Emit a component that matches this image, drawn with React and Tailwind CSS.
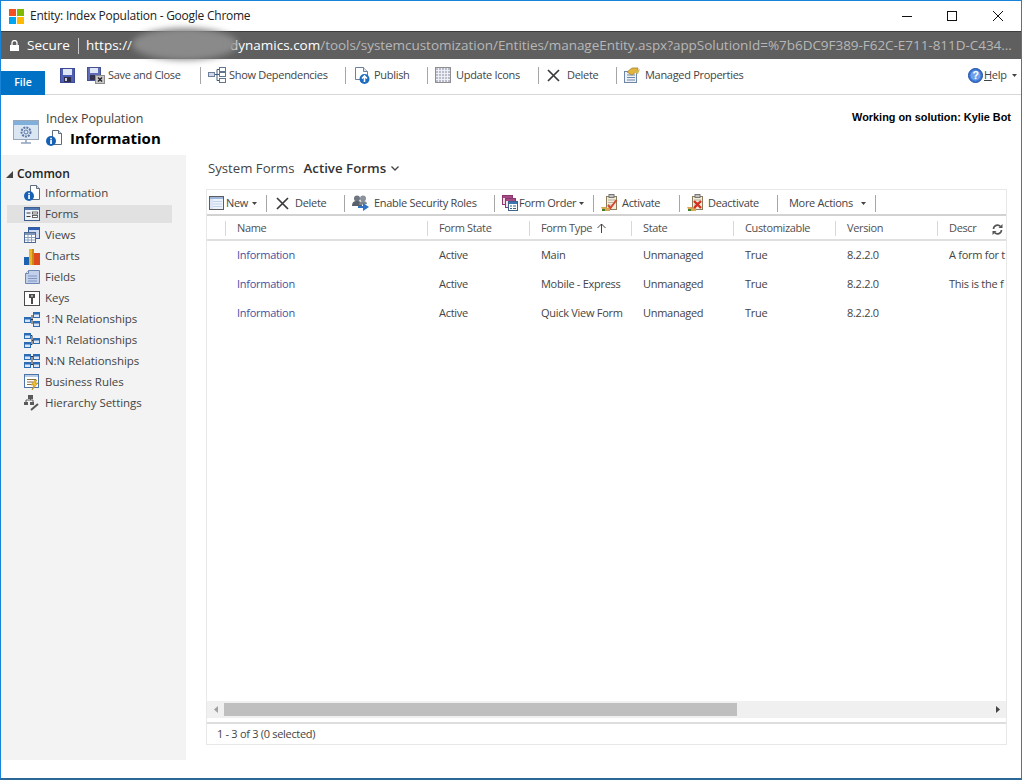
import React from "react";

const F = "font-['Open_Sans',sans-serif]";

const Svg = ({ w = 16, h = 16, className = "", children }) => (
  <svg width={w} height={h} viewBox={`0 0 ${w} ${h}`} className={"shrink-0 " + className}>{children}</svg>
);

const Floppy = () => (
  <Svg w={15} h={15}>
    <rect x="0.5" y="0.5" width="14" height="14" fill="#4f5fb5" stroke="#3c4a96" />
    <rect x="3" y="1" width="9" height="6" fill="#dfe6f5" />
    <rect x="4" y="9" width="7" height="5" fill="#2d2d4a" />
    <rect x="5" y="10" width="2" height="3" fill="#c9cfe0" />
  </Svg>
);
const FloppyClose = () => (
  <Svg w={18} h={17}>
    <rect x="0.5" y="0.5" width="13" height="13" fill="#5f6db8" stroke="#46528f" />
    <rect x="3" y="1" width="8" height="5" fill="#dfe6f5" />
    <rect x="3" y="8" width="7" height="5" fill="#34344f" />
    <rect x="8.5" y="8.5" width="9" height="8" fill="#c8c8c8" stroke="#8c8c8c" />
    <path d="M11 10.5l4 4M15 10.5l-4 4" stroke="#222" strokeWidth="1.4" />
  </Svg>
);
const Deps = () => (
  <Svg w={18} h={16}>
    <rect x="0.5" y="5.5" width="6" height="4" fill="#cfd8e8" stroke="#6d7f99" />
    <rect x="11.5" y="0.5" width="6" height="4" fill="#fff" stroke="#5f7590" />
    <rect x="11.5" y="5.5" width="6" height="4" fill="#fff" stroke="#5f7590" />
    <rect x="11.5" y="11.5" width="6" height="4" fill="#fff" stroke="#5f7590" />
    <path d="M7 7.5h4M9 2.5v11M9 2.5h2M9 13.5h2" stroke="#3f5a7a" fill="none" />
  </Svg>
);
const Publish = () => (
  <Svg w={16} h={17}>
    <path d="M1.5.5h8l4 4v8h-12z" fill="#fff" stroke="#6f7f95" />
    <path d="M9.5.5v4h4" fill="#dfe7f2" stroke="#6f7f95" />
    <circle cx="10.5" cy="12" r="5" fill="#1c6cc0" />
    <path d="M10.5 15v-5M8 11.5l2.5-2.5 2.5 2.5" stroke="#fff" strokeWidth="1.6" fill="none" />
  </Svg>
);
const GridIcon = () => (
  <Svg w={16} h={16}>
    <rect x="0.5" y="0.5" width="15" height="15" fill="#b9bccb" stroke="#8f8f8f" />
    <path d="M3.5 1v14M6.5 1v14M9.5 1v14M12.5 1v14M1 3.5h14M1 6.5h14M1 9.5h14M1 12.5h14" stroke="#eef0f6" />
  </Svg>
);
const XIcon = ({ s = 13 }) => (
  <Svg w={s} h={s}>
    <path d={`M1 1L${s - 1} ${s - 1}M${s - 1} 1L1 ${s - 1}`} stroke="#3a3a3a" strokeWidth="1.7" />
  </Svg>
);
const Managed = () => (
  <Svg w={17} h={16}>
    <rect x="0.5" y="4.5" width="12" height="11" fill="#eef2f8" stroke="#6e86a5" />
    <path d="M3 8h8M3 10.5h8M3 13h8" stroke="#6e86a5" />
    <path d="M3 5l5-4h6l-1 3-5 4z" fill="#e3b53d" stroke="#9a7a22" strokeWidth="0.7" />
    <path d="M9 5l7-3-2 5z" fill="#d4b655" />
  </Svg>
);
const HelpI = () => (
  <Svg w={15} h={15}>
    <circle cx="7.5" cy="7.5" r="7" fill="#3d78d6" stroke="#1f4fa3" />
    <circle cx="7.5" cy="7.5" r="5" fill="#6fa1e8" />
    <text x="7.5" y="11.2" textAnchor="middle" fontSize="10.5" fontWeight="700" fill="#fff" fontFamily="Liberation Sans">?</text>
  </Svg>
);
const Info = () => (
  <Svg w={16} h={16}>
    <path d="M6.5.5h6l3 3v11h-9z" fill="#fff" stroke="#5d6b7e" />
    <path d="M12.5.5v3h3" fill="#d8dfe9" stroke="#5d6b7e" />
    <circle cx="5" cy="11" r="5" fill="#1761b4" />
    <rect x="4.2" y="10" width="1.7" height="4" fill="#fff" />
    <rect x="4.2" y="7.8" width="1.7" height="1.5" fill="#fff" />
  </Svg>
);
const Forms = () => (
  <Svg w={16} h={14}>
    <rect x="0.5" y="0.5" width="15" height="13" fill="#eef2f8" stroke="#3f5f8f" />
    <rect x="1" y="1" width="14" height="2" fill="#4f78b0" />
    <path d="M2.5 6h4M2.5 9.5h4" stroke="#3b3b3b" />
    <rect x="8.5" y="5" width="5" height="2" fill="#fff" stroke="#444" strokeWidth="0.8" />
    <rect x="8.5" y="8.5" width="5" height="2" fill="#fff" stroke="#444" strokeWidth="0.8" />
  </Svg>
);
const Views = () => (
  <Svg w={16} h={16}>
    <rect x="4.5" y="0.5" width="11" height="11" fill="#cfdaf0" stroke="#365c9a" />
    <rect x="5" y="1" width="10" height="2" fill="#2f5fb5" />
    <rect x="0.5" y="5.5" width="11" height="10" fill="#fff" stroke="#4d6a94" />
    <rect x="1" y="6" width="10" height="2" fill="#7f96ba" />
    <path d="M4 8v7M7.5 8v7M1 10.5h10M1 13h10" stroke="#8da0bd" />
  </Svg>
);
const Charts = () => (
  <Svg w={16} h={17}>
    <rect x="0" y="9" width="5" height="8" fill="#1d62b0" />
    <rect x="5" y="1" width="5" height="16" fill="#e9b42a" />
    <rect x="8" y="1" width="2" height="16" fill="#c98c13" />
    <rect x="10" y="5" width="6" height="12" fill="#de4a1e" />
  </Svg>
);
const Fields = () => (
  <Svg w={15} h={14}>
    <path d="M3.5.5h11v13H.5V3.5z" fill="#c3d0ea" stroke="#6f87b5" />
    <path d="M3.5.5v3H.5" fill="#eef2f9" stroke="#6f87b5" />
    <path d="M3 6h9M3 8.5h9M3 11h9" stroke="#7f96c4" />
  </Svg>
);
const Keys = () => (
  <Svg w={16} h={15}>
    <rect x="0.5" y="0.5" width="15" height="14" fill="#fff" stroke="#4b4b4b" />
    <rect x="5" y="3" width="6" height="4" fill="#4b4b4b" />
    <rect x="7" y="7" width="2" height="6" fill="#4b4b4b" />
    <rect x="7" y="4.5" width="2" height="1" fill="#fff" />
  </Svg>
);
const Node = ({ x, y, w = 6, h = 5 }) => (
  <g>
    <rect x={x + 0.5} y={y + 0.5} width={w} height={h} fill="#d9e6f7" stroke="#2c6cb5" />
    <rect x={x + 1} y={y + 1} width={w - 1} height="1.5" fill="#2c6cb5" />
  </g>
);
const Rel1 = () => (
  <Svg w={16} h={16}>
    <Node x={0} y={6} /><Node x={9} y={1} /><Node x={9} y={10} />
    <path d="M7 8.5h2M8 4v9" stroke="#333" />
  </Svg>
);
const Rel2 = () => (
  <Svg w={16} h={16}>
    <Node x={0} y={1} /><Node x={0} y={10} /><Node x={9} y={6} />
    <path d="M7 3.5h1v9H7M8 8.5h1" stroke="#333" fill="none" />
  </Svg>
);
const Rel3 = () => (
  <Svg w={16} h={16}>
    <Node x={0} y={1} /><Node x={0} y={9} /><Node x={9} y={1} /><Node x={9} y={9} />
    <path d="M7 3.5h2M7 11.5h2M8 4v7" stroke="#333" />
  </Svg>
);
const Rules = () => (
  <Svg w={16} h={16}>
    <rect x="0.5" y="0.5" width="14" height="13" fill="#fff" stroke="#4c74a8" />
    <rect x="1" y="1" width="13" height="2" fill="#b9cbe4" />
    <path d="M3 5.5h9M3 8h6M3 10.5h4" stroke="#8a6b3c" />
    <path d="M11 6l-4 5h3l-2 5 6-7h-3l2-3z" fill="#f1c232" stroke="#a87a0c" strokeWidth="0.6" />
  </Svg>
);
const Hier = () => (
  <Svg w={16} h={16}>
    <rect x="4" y="0" width="5" height="4" fill="#5a5a5a" />
    <rect x="0" y="7" width="4" height="3" fill="#5a5a5a" />
    <rect x="6" y="7" width="4" height="3" fill="#5a5a5a" />
    <path d="M2 7V5h7v2M6.5 4v1" stroke="#5a5a5a" fill="none" />
    <path d="M7 15l7-6" stroke="#555" strokeWidth="2" />
  </Svg>
);
const NewI = () => (
  <Svg w={15} h={14}>
    <rect x="0.5" y="0.5" width="14" height="13" fill="#eef3fb" stroke="#5c5c5c" />
    <rect x="1" y="1" width="13" height="2" fill="#9bb7dc" />
    <path d="M2 5.5h11M2 8h11M2 10.5h11" stroke="#c3d3ea" />
    <rect x="1" y="3" width="3" height="10" fill="#dbe5f3" />
  </Svg>
);
const Security = () => (
  <Svg w={17} h={16}>
    <circle cx="5" cy="3.5" r="3" fill="#6e7681" />
    <circle cx="11" cy="3.5" r="3" fill="#8b929b" />
    <path d="M0 11c0-4 2-5 5-5s5 1 5 5z" fill="#59616c" />
    <path d="M7 10c0-3 2-4 4-4s4 1 4 3z" fill="#7d858f" />
    <path d="M6 11h5V8l6 4-6 4v-3H6z" fill="#2f74c4" />
  </Svg>
);
const OrderI = () => (
  <Svg w={16} h={16}>
    <rect x="0.5" y="0.5" width="10" height="9" fill="#f0d9e6" stroke="#8c3a6e" />
    <rect x="1" y="1" width="9" height="2" fill="#a54a85" />
    <rect x="3.5" y="3.5" width="10" height="9" fill="#f4e4ee" stroke="#8c3a6e" />
    <rect x="4" y="4" width="9" height="2" fill="#a54a85" />
    <rect x="6.5" y="6.5" width="9" height="9" fill="#fff" stroke="#3c628f" />
    <rect x="7" y="7" width="8" height="2" fill="#3f74b5" />
    <path d="M8 11h2M8 13.5h2M11 11h3M11 13.5h3" stroke="#3f5f85" />
  </Svg>
);
const Clip = ({ red }) => (
  <Svg w={18} h={18}>
    <rect x="5.5" y="2.5" width="10" height="13" fill="#f4ecd8" stroke="#8a7c5c" />
    <rect x="8" y="0.5" width="5" height="3" fill="#c2c2c2" stroke="#777" />
    <path d="M7 6h7M7 8.5h7M7 11h5" stroke="#b5b0a0" />
    <path d="M0 13h5l1 1 3-1v4H4l-2 0z" fill="#d9a752" />
    <path d="M1 15h3v2H1z" fill="#4a7a2c" />
    {red ? (
      <path d="M7 7l7 7M14 7l-7 7" stroke="#d62f21" strokeWidth="2.4" />
    ) : (
      <path d="M7 11l2.5 3 6-8" stroke="#d6472f" strokeWidth="2" fill="none" />
    )}
  </Svg>
);
const Caret = ({ className = "" }) => (
  <Svg w={5} h={3} className={className}>
    <path d="M0 0h5L2.5 3z" fill="#444" />
  </Svg>
);
const Sep = ({ className = "" }) => <div className={"w-px h-[17px] bg-[#a6a6a6] shrink-0 " + className} />;

const navItems = [
  ["Information", Info],
  ["Forms", Forms],
  ["Views", Views],
  ["Charts", Charts],
  ["Fields", Fields],
  ["Keys", Keys],
  ["1:N Relationships", Rel1],
  ["N:1 Relationships", Rel2],
  ["N:N Relationships", Rel3],
  ["Business Rules", Rules],
  ["Hierarchy Settings", Hier],
];

const rows = [
  ["Active", "Main", "Unmanaged", "True", "8.2.2.0", "A form for t"],
  ["Active", "Mobile - Express", "Unmanaged", "True", "8.2.2.0", "This is the f"],
  ["Active", "Quick View Form", "Unmanaged", "True", "8.2.2.0", ""],
];

const cols = "grid grid-cols-[18px_202px_102px_102px_102px_102px_102px_1fr]";

export default function App() {
  return (
    <div className={F + " w-[1022px] h-[780px] overflow-hidden bg-white border border-[#1883d7] border-b-[2px] border-b-[#2b6797] flex flex-col text-[#444] text-[11px] tracking-[-0.3px]"}>
      {/* title bar */}
      <div className="h-[30px] flex items-center shrink-0 pl-[8px]">
        <div className="grid grid-cols-2 gap-px w-[15px] h-[15px] shrink-0">
          <div className="bg-[#f25022]" />
          <div className="bg-[#7fba00]" />
          <div className="bg-[#00a4ef]" />
          <div className="bg-[#ffb900]" />
        </div>
        <span className="ml-[6px] text-[12px] text-[#222] tracking-[-0.25px] whitespace-nowrap">Entity: Index Population - Google Chrome</span>
        <div className="ml-auto flex items-center pr-[18px]">
          <div className="w-[10px] h-px bg-[#111]" />
          <div className="ml-[35px] w-[10px] h-[10px] border border-[#111]" />
          <Svg w={10} h={10} className="ml-[36px]">
            <path d="M0 0l10 10M10 0L0 10" stroke="#111" strokeWidth="1" />
          </Svg>
        </div>
      </div>
      {/* address bar */}
      <div className="relative h-[28px] shrink-0 bg-[#5f5f5f] border-t border-[#3d3d3d] flex items-center pl-[9px] text-[13.5px] tracking-[0px] whitespace-nowrap overflow-visible">
        <Svg w={9} h={11} className="shrink-0">
          <path d="M2 5V3a2.5 2.5 0 015 0v2" stroke="#fff" fill="none" strokeWidth="1.3" />
          <rect x="0" y="5" width="9" height="6" fill="#fff" />
        </Svg>
        <span className="ml-[8px] text-white w-[42px] shrink-0">Secure</span>
        <div className="ml-[9px] w-px h-[16px] bg-[#c9c9c9] shrink-0" />
        <span className="ml-[7px] text-white w-[144px] shrink-0">https://</span>
        <span className="text-white shrink-0">dynamics.com</span>
        <span className="text-[#b7b7b7] tracking-[-0.04px] shrink-0">/tools/systemcustomization/Entities/manageEntity.aspx?appSolutionId=%7b6DC9F389-F62C-E711-811D-C434...</span>
        <div className="absolute left-[131px] top-[-4px] w-[106px] h-[32px] rounded-[50%] bg-[#8a8a8a] blur-[3px]" />
      </div>
      {/* command bar */}
      <div className="h-[36px] shrink-0 border-b border-[#d6d6d6] flex items-start relative">
        <div className="mt-[12px] w-[44px] h-[24px] bg-[#0072c6] text-white flex items-center justify-center font-semibold text-[10.5px] tracking-[0px] shrink-0">File</div>
        <div className="flex items-center h-[32px] whitespace-nowrap">
          <div className="ml-[15px]"><Floppy /></div>
          <div className="ml-[12px]"><FloppyClose /></div>
          <span className="ml-[3px] w-[74px]">Save and Close</span>
          <Sep className="ml-[18px]" />
          <div className="ml-[7px]"><Deps /></div>
          <span className="ml-[3px] w-[98px]">Show Dependencies</span>
          <Sep className="ml-[18px]" />
          <div className="ml-[8px]"><Publish /></div>
          <span className="ml-[4px] w-[35px]">Publish</span>
          <Sep className="ml-[18px]" />
          <div className="ml-[7px]"><GridIcon /></div>
          <span className="ml-[5px] w-[64px]">Update Icons</span>
          <Sep className="ml-[18px]" />
          <div className="ml-[8px]"><XIcon /></div>
          <span className="ml-[7px] w-[31px]">Delete</span>
          <Sep className="ml-[18px]" />
          <div className="ml-[7px]"><Managed /></div>
          <span className="ml-[4px] w-[99px]">Managed Properties</span>
          <div className="ml-[224px]"><HelpI /></div>
          <span className="ml-[1px] w-[24px]"><span className="underline">H</span>elp</span>
          <Caret className="ml-[4px]" />
        </div>
      </div>
      {/* entity header */}
      <div className="h-[60px] shrink-0 flex relative">
        <Svg w={28} h={26} className="ml-[11px] mt-[24px]">
          <rect x="1.5" y="1.5" width="25" height="19" fill="#dbe6f3" stroke="#9aa7b8" />
          <rect x="2" y="2" width="24" height="4" fill="#7fb0dc" />
          <circle cx="14" cy="13" r="4.5" fill="none" stroke="#5c78a8" strokeWidth="2" strokeDasharray="2 1" />
          <circle cx="14" cy="13" r="2" fill="none" stroke="#5c78a8" />
          <path d="M14 21v3M9 24h10" stroke="#8fa3bd" strokeWidth="1.5" />
        </Svg>
        <div className="ml-[6px] flex flex-col">
          <span className="mt-[15px] text-[12.5px] tracking-[-0.1px] leading-[18px] text-[#444]">Index Population</span>
          <div className="flex items-center mt-[-1px]">
            <Info />
            <span className="ml-[8px] text-[15px] leading-[22px] font-bold text-black tracking-[0px]">Information</span>
          </div>
        </div>
        <span className="ml-auto mr-[10px] mt-[15px] font-['Liberation_Sans',sans-serif] font-bold text-[10.9px] tracking-[0px] text-black leading-[14px]">Working on solution: Kylie Bot</span>
      </div>
      {/* body */}
      <div className="h-[605px] shrink-0 flex">
        <div className="w-[185px] shrink-0 bg-[#f3f3f3] pt-[9px]">
          <div className="h-[20px] flex items-center pl-[5px]">
            <Svg w={7} h={7}><path d="M7 0v7H0z" fill="#444" /></Svg>
            <span className="ml-[4px] text-[12px] font-semibold text-[#222] tracking-[0px]">Common</span>
          </div>
          <div className="flex flex-col gap-[3px] ml-[6px] w-[165px]">
            {navItems.map(([label, Icon]) => (
              <div key={label} className={"h-[18px] flex items-center " + (label === "Forms" ? "bg-[#e1e1e1]" : "")}>
                <div className="w-[17px] shrink-0" />
                <div className="w-[16px] flex justify-center shrink-0"><Icon /></div>
                <span className="ml-[5px] text-[11.5px] tracking-[-0.05px] whitespace-nowrap text-[#444]">{label}</span>
              </div>
            ))}
          </div>
        </div>
        <div className="flex-1 pl-[20px] min-w-0 flex flex-col">
          <div className="h-[27px] flex items-center pl-[2px] whitespace-nowrap shrink-0">
            <span className="text-[13.2px] text-[#444] tracking-[0px]">System Forms</span>
            <span className="ml-[9px] text-[13.3px] font-semibold text-[#333] tracking-[0px]">Active Forms</span>
            <Svg w={8} h={5} className="ml-[5px]"><path d="M.5.5L4 4 7.5.5" stroke="#444" strokeWidth="1.3" fill="none" /></Svg>
          </div>
          <div className="w-[801px] h-[556px] mt-[7px] border border-[#e8e8e8] flex flex-col shrink-0">
            <div className="h-[24px] pt-[2px] shrink-0 flex items-center whitespace-nowrap">
              <div className="ml-[2px]"><NewI /></div>
              <span className="ml-[2px] w-[22px]">New</span>
              <Caret className="ml-[4px]" />
              <Sep className="ml-[9px]" />
              <div className="ml-[9px]"><XIcon /></div>
              <span className="ml-[6px] w-[31px]">Delete</span>
              <Sep className="ml-[18px]" />
              <div className="ml-[7px]"><Security /></div>
              <span className="ml-[5px] w-[102px]">Enable Security Roles</span>
              <Sep className="ml-[18px]" />
              <div className="ml-[7px]"><OrderI /></div>
              <span className="ml-[1px] w-[56px]">Form Order</span>
              <Caret className="ml-[4px]" />
              <Sep className="ml-[9px]" />
              <div className="ml-[7px]"><Clip /></div>
              <span className="ml-[3px] w-[39px]">Activate</span>
              <Sep className="ml-[18px]" />
              <div className="ml-[7px]"><Clip red /></div>
              <span className="ml-[3px] w-[51px]">Deactivate</span>
              <Sep className="ml-[18px]" />
              <span className="ml-[11px] w-[66px]">More Actions</span>
              <Caret className="ml-[6px]" />
              <Sep className="ml-[9px]" />
            </div>
            <div className="h-[2px] shrink-0 bg-[#d2d2d2]" />
            <div className={cols + " h-[25px] pt-[1px] shrink-0 border-b-2 border-[#e0e0e0] items-center text-[#505050] tracking-[-0.35px] relative"}>
              <div />
              {["Name", "Form State", "Form Type", "State", "Customizable", "Version"].map((h) => (
                <div key={h} className="h-[15px] border-l border-[#d8d8d8] pl-[11px] flex items-center whitespace-nowrap">
                  {h}
                  {h === "Form Type" && (
                    <Svg w={9} h={10} className="ml-[5px]"><path d="M4.5 10V1M.5 5l4-4 4 4" stroke="#444" fill="none" /></Svg>
                  )}
                </div>
              ))}
              <div className="h-[15px] border-l border-[#d8d8d8] pl-[11px] flex items-center">Descr</div>
              <Svg w={11} h={11} className="absolute right-[3px] top-[8px]">
                <path d="M1.5 5a4 4 0 017-2.5M9.5 6a4 4 0 01-7 2.5" stroke="#555" strokeWidth="1.6" fill="none" />
                <path d="M10.5 0v4h-4zM.5 11V7h4z" fill="#555" />
              </Svg>
            </div>
            <div className="flex-1 min-h-0 overflow-hidden tracking-[-0.28px]">
              {rows.map((r, i) => (
                <div key={i} className={cols + " h-[29px] items-center"}>
                  <div />
                  <div className="pl-[12px] text-[#3f51a3]">Information</div>
                  {r.map((c, j) => (
                    <div key={j} className="pl-[12px] whitespace-nowrap">{c}</div>
                  ))}
                </div>
              ))}
            </div>
            <div className="h-[17px] shrink-0 bg-[#f0f0f0] flex items-center">
              <Svg w={4} h={7} className="ml-[7px]"><path d="M4 0v7L0 3.5z" fill="#a0a0a0" /></Svg>
              <div className="ml-[6px] w-[513px] h-[13px] bg-[#bfbfbf]" />
              <Svg w={4} h={7} className="ml-auto mr-[6px]"><path d="M0 0v7l4-3.5z" fill="#444" /></Svg>
            </div>
            <div className="h-[4px] shrink-0" />
            <div className="h-[2px] shrink-0 bg-[#dedede]" />
            <div className="h-[20px] shrink-0 flex items-center pl-[10px] text-[#444] whitespace-nowrap">1 - 3 of 3 (0 selected)</div>
          </div>
        </div>
      </div>
    </div>
  );
}
